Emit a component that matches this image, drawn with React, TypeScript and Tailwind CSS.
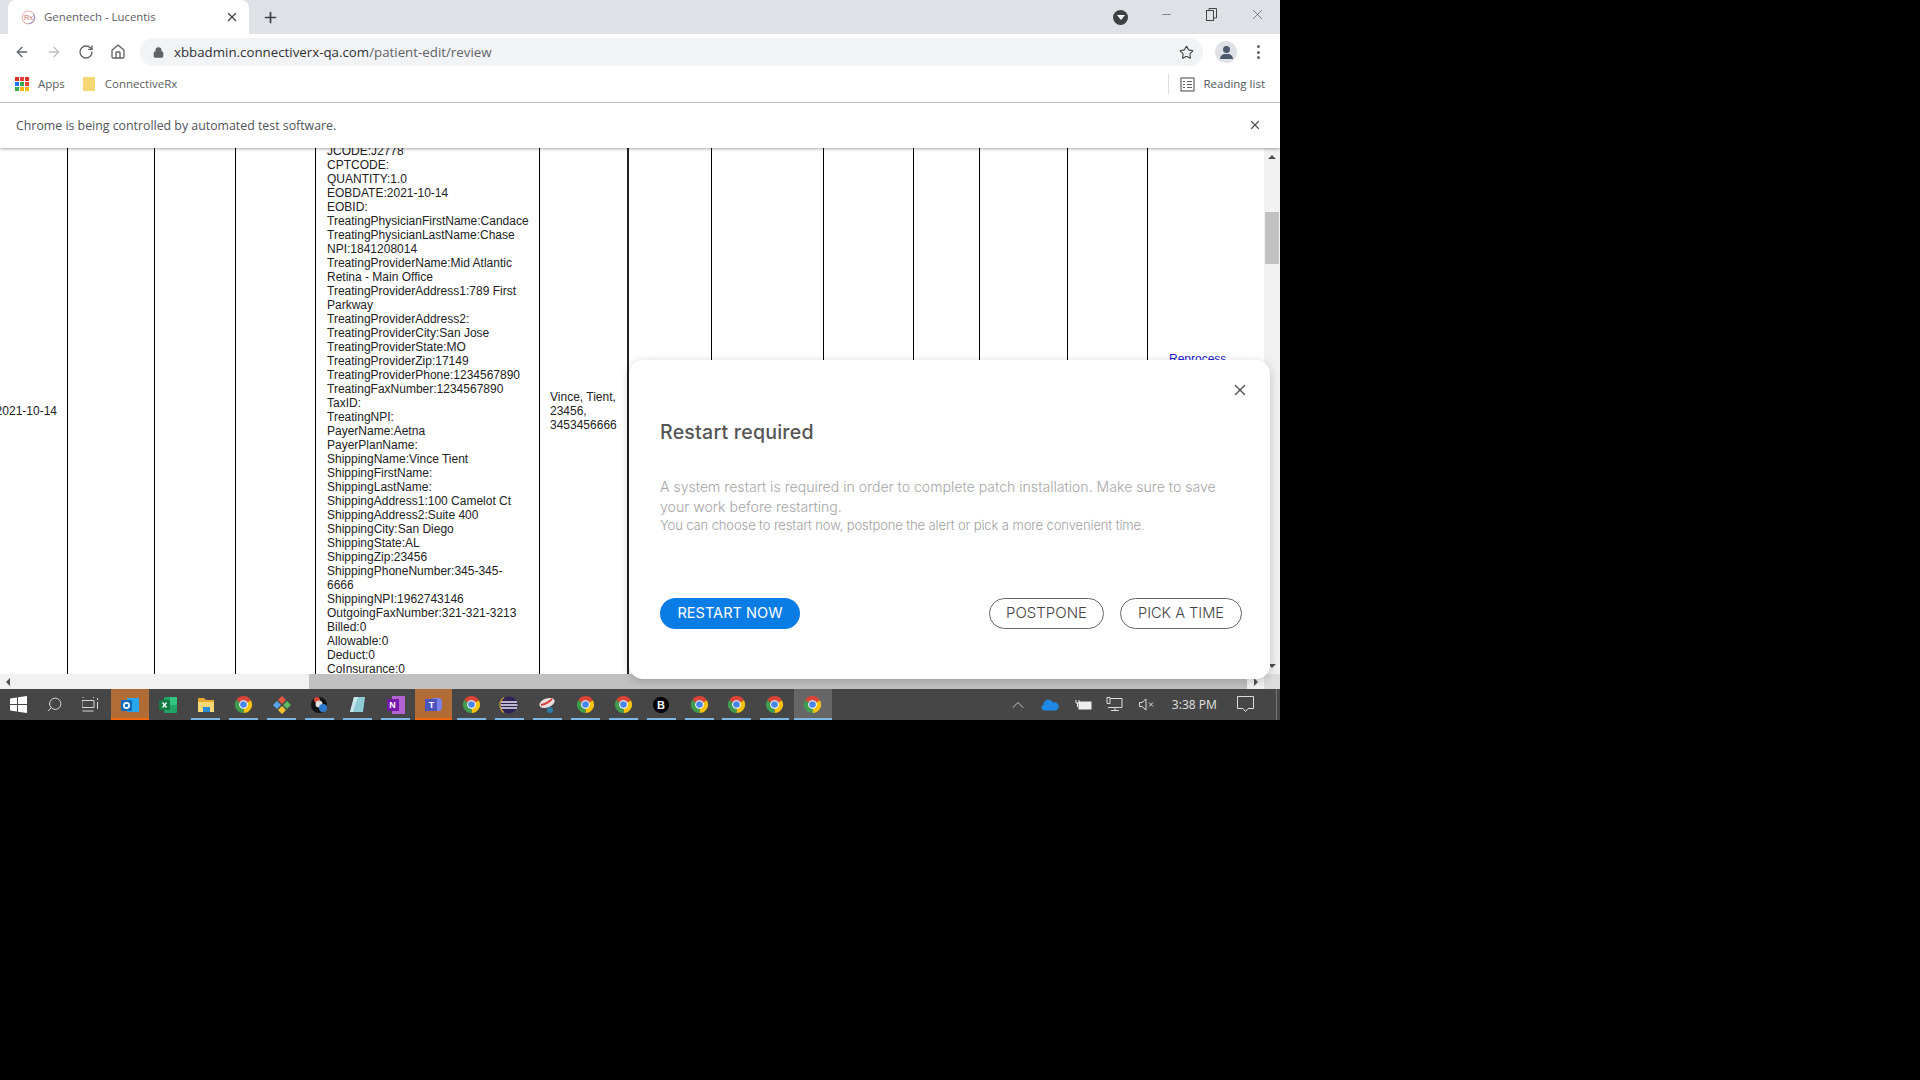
import React from "react";
import { ArrowLeft, ArrowRight, RotateCw, Home, Lock, Star, X, Plus, Minus, ChevronUp, Search } from "lucide-react";

const lines = [
  "JCODE:J2778", "CPTCODE:", "QUANTITY:1.0", "EOBDATE:2021-10-14", "EOBID:",
  "TreatingPhysicianFirstName:Candace", "TreatingPhysicianLastName:Chase", "NPI:1841208014",
  "TreatingProviderName:Mid Atlantic Retina - Main Office", "TreatingProviderAddress1:789 First Parkway",
  "TreatingProviderAddress2:", "TreatingProviderCity:San Jose", "TreatingProviderState:MO",
  "TreatingProviderZip:17149", "TreatingProviderPhone:1234567890", "TreatingFaxNumber:1234567890",
  "TaxID:", "TreatingNPI:", "PayerName:Aetna", "PayerPlanName:", "ShippingName:Vince Tient",
  "ShippingFirstName:", "ShippingLastName:", "ShippingAddress1:100 Camelot Ct", "ShippingAddress2:Suite 400",
  "ShippingCity:San Diego", "ShippingState:AL", "ShippingZip:23456", "ShippingPhoneNumber:345-345-6666",
  "ShippingNPI:1962743146", "OutgoingFaxNumber:321-321-3213", "Billed:0", "Allowable:0", "Deduct:0", "CoInsurance:0",
];

function ChromeIcon() {
  return (
    <svg width="19" height="19" viewBox="0 0 20 20">
      <path d="M10 10L2.2 5.5A9 9 0 0 1 17.8 5.5Z" fill="#db4437" />
      <path d="M10 10L17.8 5.5A9 9 0 0 1 10 19Z" fill="#f4c20d" />
      <path d="M10 10L10 19A9 9 0 0 1 2.2 5.5Z" fill="#3f9c4f" />
      <circle cx="10" cy="10" r="4.6" fill="#fff" />
      <circle cx="10" cy="10" r="3.5" fill="#4a85ea" />
    </svg>
  );
}

function Glyph({ kind }: { kind: string }) {
  switch (kind) {
    case "outlook":
      return (
        <svg width="20" height="20" viewBox="0 0 20 20">
          <rect x="7" y="3" width="12" height="14" rx="1" fill="#28a8ea" />
          <rect x="1" y="5" width="11" height="11" rx="1" fill="#0f6cbd" />
          <circle cx="6.5" cy="10.5" r="2.6" fill="none" stroke="#fff" strokeWidth="1.6" />
        </svg>
      );
    case "excel":
      return (
        <svg width="20" height="20" viewBox="0 0 20 20">
          <rect x="6" y="2" width="13" height="16" rx="1" fill="#21a366" />
          <rect x="12" y="2" width="7" height="8" fill="#33c481" />
          <rect x="1" y="5" width="11" height="10" rx="1" fill="#107c41" />
          <path d="M4.5 7.5l4 5M8.500 7.500l-4 5" stroke="#fff" strokeWidth="1.3" />
        </svg>
      );
    case "explorer":
      return (
        <svg width="20" height="20" viewBox="0 0 20 20">
          <path d="M2 3h6l2 2h8v3H2Z" fill="#e8a92c" />
          <rect x="2" y="7" width="16" height="10" fill="#f8d775" />
          <rect x="7" y="12" width="7" height="5" fill="#2b8ad8" />
        </svg>
      );
    case "git":
      return (
        <svg width="20" height="20" viewBox="0 0 20 20">
          <path d="M10 1l4 4-4 4-4-4Z" fill="#e0593f" />
          <path d="M5 6l4 4-4 4-4-4Z" fill="#5aa5e6" />
          <path d="M15 6l4 4-4 4-4-4Z" fill="#5db85c" />
          <path d="M10 11l4 4-4 4-4-4Z" fill="#f2c230" />
        </svg>
      );
    case "dark":
      return (
        <svg width="20" height="20" viewBox="0 0 20 20">
          <circle cx="9" cy="10" r="8" fill="#111" />
          <circle cx="7" cy="5" r="3" fill="#d8453a" />
          <circle cx="9" cy="9" r="3.5" fill="#ddd" />
          <circle cx="13" cy="13" r="4" fill="#2f79d0" />
        </svg>
      );
    case "note":
      return (
        <svg width="20" height="20" viewBox="0 0 20 20">
          <path d="M6 2h11l-2 15H2Z" fill="#8fcdd6" />
          <path d="M6 2h4l-5 15H2Z" fill="#c9e6ea" />
        </svg>
      );
    case "onenote":
      return (
        <div className="relative w-[20px] h-[20px]">
          <div className="absolute right-[1px] top-[1px] w-[13px] h-[18px] bg-[#b263cf]" />
          <div className="absolute left-[1px] top-[4px] w-[12px] h-[12px] bg-[#7719aa] text-white text-[9px] leading-[12px] text-center font-bold font-['Liberation_Sans']">N</div>
        </div>
      );
    case "teams":
      return (
        <div className="relative w-[20px] h-[20px]">
          <div className="absolute right-[1px] top-[3px] w-[11px] h-[13px] rounded-sm bg-[#7b83eb]" />
          <div className="absolute left-[2px] top-[4px] w-[12px] h-[12px] bg-[#4b53bc] text-white text-[9px] leading-[12px] text-center font-bold font-['Liberation_Sans']">T</div>
        </div>
      );
    case "eclipse":
      return (
        <svg width="20" height="20" viewBox="0 0 20 20">
          <circle cx="10" cy="10" r="8.500" fill="#2c2255" />
          <path d="M2 7h16M1.500 10h17M2 13h16" stroke="#e8e8f0" strokeWidth="1.300" />
          <path d="M5 2.500A9 9 0 0 0 5 17.500" fill="none" stroke="#c9963b" strokeWidth="1.300" />
        </svg>
      );
    case "swirl":
      return (
        <svg width="20" height="20" viewBox="0 0 20 20">
          <ellipse cx="10" cy="8" rx="8" ry="4.500" fill="#e9dfe0" transform="rotate(-20 10 8)" />
          <path d="M4 10q6-1 11-6" stroke="#d8453a" strokeWidth="1.800" fill="none" />
          <circle cx="13" cy="15" r="3" fill="#2e7ea8" />
        </svg>
      );
    case "b":
      return <div className="w-[16px] h-[16px] rounded-full bg-black text-white text-[11px] leading-[16px] text-center font-bold font-['Liberation_Sans']">B</div>;
    default:
      return <ChromeIcon />;
  }
}

const apps: { k: string; u: "none" | "blue" | "hot" | "active" }[] = [
  { k: "outlook", u: "hot" }, { k: "excel", u: "none" }, { k: "explorer", u: "blue" }, { k: "chrome", u: "blue" },
  { k: "git", u: "blue" }, { k: "dark", u: "blue" }, { k: "note", u: "blue" }, { k: "onenote", u: "blue" },
  { k: "teams", u: "hot" }, { k: "chrome", u: "blue" }, { k: "eclipse", u: "blue" }, { k: "swirl", u: "blue" },
  { k: "chrome", u: "blue" }, { k: "chrome", u: "blue" }, { k: "b", u: "blue" }, { k: "chrome", u: "blue" },
  { k: "chrome", u: "blue" }, { k: "chrome", u: "blue" }, { k: "chrome", u: "active" },
];

function TaskApp({ k, u }: { k: string; u: string }) {
  const bg = u === "hot" ? "bg-[#b06c34]" : u === "active" ? "bg-[#666666]" : "";
  const bar = u === "hot" ? "w-full bg-[#f0690f]" : u === "active" ? "w-full bg-[#7db7e6]" : u === "blue" ? "w-[29px] bg-[#7db7e6]" : "";
  return (
    <div className={`relative w-[37.95px] h-full flex items-center justify-center ${bg}`}>
      <Glyph kind={k} />
      {bar && <div className={`absolute bottom-0 h-[2px] ${bar}`} />}
    </div>
  );
}

function Cell({ w, children, className = "" }: { w: string; children?: React.ReactNode; className?: string }) {
  return <div className={`${w} shrink-0 h-full ${className}`}>{children}</div>;
}

export default function App() {
  return (
    <div className="w-[1920px] h-[1080px] bg-black overflow-hidden">
      <div className="relative w-[1280px] h-[720px] flex flex-col bg-white font-['Open_Sans',sans-serif]">
        {/* tab strip */}
        <div className="h-[34px] shrink-0 bg-[#dee1e6] flex items-end pl-[8px] text-[#45494d]">
          <div className="w-[241px] h-[34px] bg-white rounded-t-lg flex items-center pl-[13px] pr-[10px]">
            <svg width="15" height="15" viewBox="0 0 16 16" className="shrink-0">
              <circle cx="8" cy="8" r="6.800" fill="none" stroke="#e8a4a0" strokeWidth="1" />
              <path d="M13 4A6.800 6.800 0 0 1 8 14.800" fill="none" stroke="#8c7fc4" strokeWidth="1" />
              <text x="8" y="11" textAnchor="middle" fontSize="8" fill="#c9786f" fontFamily="Liberation Sans">Rx</text>
            </svg>
            <span className="ml-[8px] text-[11.400px] text-[#5a5d61] whitespace-nowrap">Genentech - Lucentis</span>
            <X className="ml-auto text-[#444]" size={14} strokeWidth={2.200} />
          </div>
          <div className="h-[34px] w-[43px] flex items-center justify-center">
            <Plus size={17} strokeWidth={2.400} className="text-[#3c4043]" />
          </div>
          <div className="ml-auto h-[34px] flex items-center">
            <div className="w-[15px] h-[15px] rounded-full bg-[#3c4043] flex items-center justify-center mr-[32px]">
              <div className="w-0 h-0 border-l-[4px] border-r-[4px] border-t-[5px] border-l-transparent border-r-transparent border-t-white" />
            </div>
            <Minus size={13} strokeWidth={1} className="mr-[33px] -mt-[5px] text-[#333]" />
            <svg width="11" height="13" viewBox="0 0 11 13" className="mr-[32px] -mt-[5px]" fill="none" stroke="#444" strokeWidth="1">
              <rect x="0.500" y="2.500" width="7" height="10" />
              <path d="M3 2.500V0.500h7.500v9.500H7.500" />
            </svg>
            <X size={17} strokeWidth={0.800} className="mr-[14px] -mt-[5px] text-[#333]" />
          </div>
        </div>

        {/* toolbar */}
        <div className="h-[32px] shrink-0 bg-white flex items-end text-[#5f6368]">
          <div className="h-[28px] w-[140px] flex items-center pl-[14px] gap-[16px]">
            <ArrowLeft size={16} strokeWidth={2} />
            <ArrowRight size={16} strokeWidth={2} className="text-[#bcc0c4]" />
            <RotateCw size={16} strokeWidth={2} />
            <Home size={16} strokeWidth={2} />
          </div>
          <div className="w-[1063px] h-[28px] rounded-full bg-[#f1f3f4] flex items-center pl-[13px] pr-[9px]">
            <Lock size={11} strokeWidth={3} className="text-[#5f6368]" fill="#5f6368" />
            <span className="ml-[10px] mt-[1px] text-[13.300px] text-[#5f6368] whitespace-nowrap">
              <span className="text-[#303134]">xbbadmin.connectiverx-qa.com</span>/patient-edit/review
            </span>
            <Star size={15} strokeWidth={1.800} className="ml-auto text-[#444]" />
          </div>
          <div className="h-[28px] flex items-center">
            <div className="ml-[12px] w-[22px] h-[22px] rounded-full bg-[#dee1e6] flex flex-col items-center justify-center">
              <div className="w-[7px] h-[7px] rounded-full bg-[#4a5a6c]" />
              <div className="w-[13px] h-[5px] rounded-t-md bg-[#4a5a6c] mt-[1px]" />
            </div>
            <div className="ml-[20px] flex flex-col gap-[2.500px]">
              <div className="w-[3px] h-[3px] rounded-full bg-[#5f6368]" />
              <div className="w-[3px] h-[3px] rounded-full bg-[#5f6368]" />
              <div className="w-[3px] h-[3px] rounded-full bg-[#5f6368]" />
            </div>
          </div>
        </div>

        {/* bookmarks */}
        <div className="h-[37px] shrink-0 bg-white border-b border-[#d0d0d0] flex items-center pl-[15px] text-[11.500px] text-[#5a5d61]">
          <div className="grid grid-cols-3 gap-[1.500px] w-[14px] h-[14px]">
            {["#d93025", "#ea4335", "#d93025", "#1a73e8", "#34a853", "#ea4335", "#34a853", "#fbbc04", "#fbbc04"].map((c, i) => (
              <div key={i} className="w-[3.500px] h-[3.500px]" style={{ backgroundColor: c }} />
            ))}
          </div>
          <span className="ml-[9px]">Apps</span>
          <div className="ml-[18px] w-[12px] h-[14px] rounded-[1px] bg-[#f7d774]" />
          <span className="ml-[10px]">ConnectiveRx</span>
          <div className="ml-auto w-px h-[20px] bg-[#dddddd]" />
          <svg width="15" height="15" viewBox="0 0 15 15" className="ml-[11px]" fill="none" stroke="#5f6368" strokeWidth="1.200">
            <rect x="1" y="1" width="13" height="13" />
            <path d="M3 4.500h2M3 7.500h2M3 10.500h2M7 4.500h5M7 7.500h5M7 10.500h5" />
          </svg>
          <span className="ml-[8px] mr-[15px] text-[#4e5257]">Reading list</span>
        </div>

        {/* infobar */}
        <div className="h-[45px] shrink-0 bg-white flex items-center pl-[16px] pr-[18px] shadow-[0_1px_3px_rgba(0,0,0,0.35)] relative z-10">
          <span className="mt-[2px] text-[12.350px] text-[#4f5357]">Chrome is being controlled by automated test software.</span>
          <X size={14} strokeWidth={2.200} className="ml-auto -mt-[1px] text-[#555]" />
        </div>

        {/* page */}
        <div className="flex-1 min-h-0 flex flex-col font-['Liberation_Sans',sans-serif] text-[12px] leading-[14px] text-[#222]">
          <div className="flex-1 min-h-0 flex">
            <div className="flex-1 min-w-0 flex overflow-hidden">
              <Cell w="w-[67px]" className="flex items-center justify-end pr-[10px] overflow-hidden">
                <span className="whitespace-nowrap">2021-10-14</span>
              </Cell>
              <Cell w="w-[87px]" className="border-l border-black" />
              <Cell w="w-[81px]" className="border-l border-black" />
              <Cell w="w-[80px]" className="border-l border-black" />
              <Cell w="w-[224px]" className="border-l border-black pl-[11px] pr-[10px]">
                <div className="-mt-[4px]">
                  {lines.map((l) => (
                    <div key={l}>{l}</div>
                  ))}
                </div>
              </Cell>
              <Cell w="w-[88px]" className="border-l border-black flex items-center pl-[10px] pr-[8px]">
                <div>
                  Vince, Tient,
                  <br />
                  23456,
                  <br />
                  3453456666
                </div>
              </Cell>
              <Cell w="w-[84px]" className="border-l-2 border-[#222]" />
              <Cell w="w-[112px]" className="border-l border-black" />
              <Cell w="w-[90px]" className="border-l border-black" />
              <Cell w="w-[66px]" className="border-l border-black" />
              <Cell w="w-[88px]" className="border-l border-black" />
              <Cell w="w-[80px]" className="border-l border-black" />
              <div className="flex-1 h-full border-l border-black pl-[21px] pt-[204px] text-[#2222cc]">Reprocess</div>
            </div>
            {/* vertical scrollbar */}
            <div className="w-[16px] shrink-0 bg-[#f1f1f1] flex flex-col items-center">
              <div className="h-[17px] flex items-center justify-center">
                <div className="w-0 h-0 border-l-[4px] border-r-[4px] border-b-[4px] border-l-transparent border-r-transparent border-b-[#505050]" />
              </div>
              <div className="mt-[47px] w-[14px] h-[52px] bg-[#c1c1c1]" />
              <div className="mt-auto h-[17px] flex items-center justify-center">
                <div className="w-0 h-0 border-l-[4px] border-r-[4px] border-t-[4px] border-l-transparent border-r-transparent border-t-[#505050]" />
              </div>
            </div>
          </div>
          {/* horizontal scrollbar */}
          <div className="h-[15px] shrink-0 bg-[#f1f1f1] flex items-center">
            <div className="w-[16px] flex justify-center">
              <div className="w-0 h-0 border-t-[4px] border-b-[4px] border-r-[4px] border-t-transparent border-b-transparent border-r-[#505050]" />
            </div>
            <div className="ml-[293px] w-[938px] h-[15px] bg-[#c1c1c1]" />
            <div className="ml-[5px] w-[8px] flex justify-center">
              <div className="w-0 h-0 border-t-[4px] border-b-[4px] border-l-[4px] border-t-transparent border-b-transparent border-l-[#505050]" />
            </div>
            <div className="ml-auto w-[16px] h-[15px] bg-[#dcdcdc]" />
          </div>
        </div>

        {/* taskbar */}
        <div className="h-[31px] shrink-0 bg-[#464646] flex items-center text-[#d8d8d8]">
          <div className="w-[36px] h-full flex items-center justify-center">
            <svg width="17" height="17" viewBox="0 0 17 17" fill="#fff">
              <path d="M0 2.500l7-1v6.500H0ZM8 1.300L17 0v8H8ZM0 9h7v6.500l-7-1ZM8 9h9v8l-9-1.300Z" />
            </svg>
          </div>
          <div className="w-[36px] h-full flex items-center justify-center">
            <Search size={17} strokeWidth={1.200} className="-scale-x-100 text-[#e8e8e8]" />
          </div>
          <div className="w-[39px] h-full flex items-center justify-center pr-[3px]">
            <svg width="17" height="15" viewBox="0 0 17 15" fill="none" stroke="#d8d8d8" strokeWidth="1">
              <path d="M0.500 0.500h1M11 0.500h1M0 3.500h12v7H0ZM0.500 14h11M15.500 1v2M15.500 5v7" />
            </svg>
          </div>
          {apps.map((a, i) => (
            <TaskApp key={i} k={a.k} u={a.u} />
          ))}
          <div className="flex-1 h-full flex items-center">
            <ChevronUp size={20} strokeWidth={1} className="ml-[176px] text-[#e0e0e0]" />
            <svg width="18" height="12" viewBox="0 0 18 12" className="ml-[13px]">
              <path d="M3 11.500a3 3 0 0 1-.5-5.800A5 5 0 0 1 12 3.500a4 4 0 0 1 3 8Z" fill="#1e88e5" />
            </svg>
            <svg width="17" height="12" viewBox="0 0 17 12" className="ml-[16px]" fill="none" stroke="#eee" strokeWidth="1">
              <rect x="4" y="3" width="12" height="7" fill="#eee" />
              <path d="M1 1v3h3V1M2.500 4v4" />
            </svg>
            <svg width="17" height="15" viewBox="0 0 17 15" className="ml-[14px]" fill="none" stroke="#ddd" strokeWidth="1">
              <path d="M4 1.500h12v9H2M9 10.500v3M5 13.500h8M1 0.500v6h3v-6Z" />
            </svg>
            <svg width="15" height="13" viewBox="0 0 15 13" className="ml-[16px]" fill="none" stroke="#ddd" strokeWidth="1">
              <path d="M0.500 4.500h2.500L7 1v11L3 8.500H0.500ZM10 4.500l4 4M14 4.500l-4 4" />
            </svg>
            <span className="ml-[18px] text-[12px] text-[#dedede] font-['Noto_Sans',sans-serif] whitespace-nowrap">3:38 PM</span>
            <svg width="17" height="17" viewBox="0 0 17 17" className="ml-[20px]" fill="none" stroke="#ddd" strokeWidth="1">
              <path d="M0.500 0.500h16v12h-5.500l-2.500 3-2.500-3H0.500Z" />
            </svg>
            <div className="ml-auto mr-[3px] w-px h-full bg-[#777]" />
          </div>
        </div>

        {/* dialog overlay */}
        <div className="absolute left-[629px] top-[360px] w-[641px] h-[319px] rounded-[14px] bg-white shadow-[0_2px_10px_rgba(0,0,0,0.2)] z-20 pt-[60px] pl-[31px] pr-[28px] font-['Inter',sans-serif]">
          <button className="absolute right-[21px] top-[21px] text-[#555]">
            <X size={18} strokeWidth={1.800} />
          </button>
          <h2 className="text-[19.600px] leading-[24px] font-medium text-[#555] tracking-[0.2px]">Restart required</h2>
          <p className="mt-[33px] w-[575px] text-[#a6a6a6] text-[14.100px] font-light leading-[20px]">
            A system restart is required in order to complete patch installation. Make sure to save your work before restarting.
          </p>
          <p className="-mt-[1px] text-[#9f9f9f] text-[13px] font-light leading-[18px] tracking-[-0.11px]">
            You can choose to restart now, postpone the alert or pick a more convenient time.
          </p>
          <div className="mt-[64px] flex items-center">
            <button className="w-[140px] h-[31px] rounded-full bg-[#0a7ce6] text-white text-[14.600px] font-normal">RESTART NOW</button>
            <button className="ml-auto w-[115px] h-[31px] rounded-full border border-[#666] text-[#444] text-[15px] font-light bg-white">POSTPONE</button>
            <button className="ml-[16px] w-[122px] h-[31px] rounded-full border border-[#666] text-[#444] text-[14.600px] font-light bg-white">PICK A TIME</button>
          </div>
        </div>
      </div>
    </div>
  );
}
